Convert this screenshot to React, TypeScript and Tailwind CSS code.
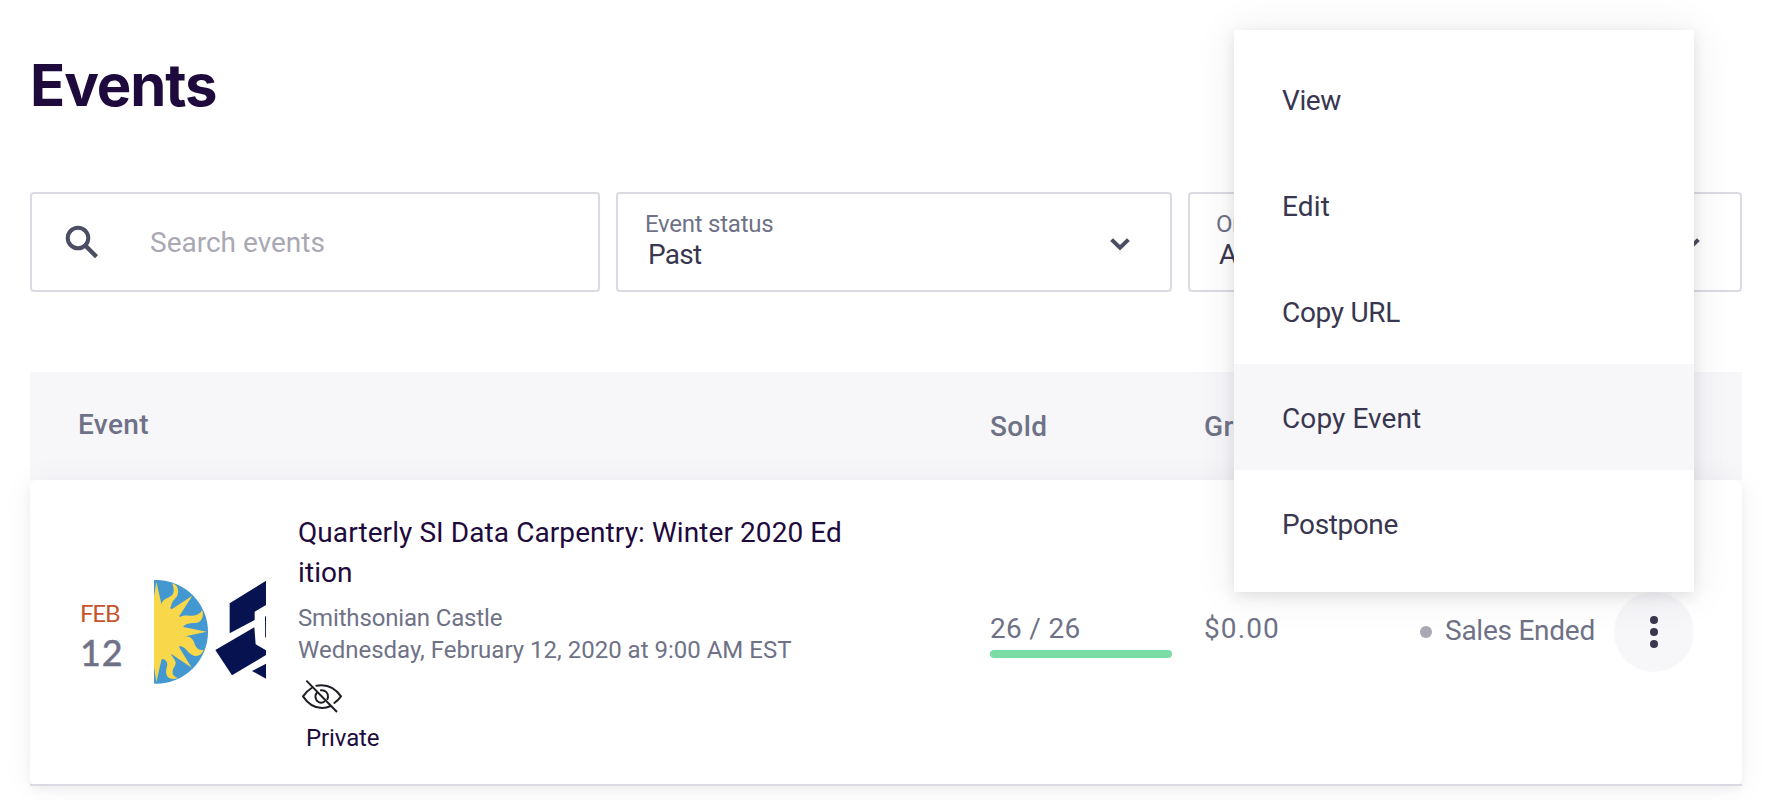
const menuItems = [
  { label: "View", tracking: "tracking-[-0.4px]" },
  { label: "Edit", tracking: "tracking-[0.2px]" },
  { label: "Copy URL", tracking: "tracking-[-0.3px]" },
  { label: "Copy Event", tracking: "tracking-[0.1px]", active: true },
  { label: "Postpone", tracking: "tracking-[-0.4px]" },
];

function SearchIcon() {
  return (
    <svg width="34" height="34" viewBox="0 0 34 34" fill="none" stroke="#4b4d63" className="shrink-0">
      <circle cx="13" cy="13" r="10.3" strokeWidth="4" />
      <path d="M20 20.200 31.500 31.700" strokeWidth="4.4" />
    </svg>
  );
}

function Chevron() {
  return (
    <svg width="20" height="13" viewBox="0 0 20 13" fill="none" stroke="#4b4d63" strokeWidth="4">
      <path d="M1.6 1.6 10 9.8l8.4-8.2" />
    </svg>
  );
}

function HiddenIcon() {
  return (
    <svg width="52" height="46" viewBox="0 0 156 138" fill="none" stroke="#1f1c24" strokeWidth="6" strokeLinejoin="round" strokeLinecap="round">
      <path d="M47 42C37 48 28 57 21 67c16 24 35 35 57 35 9 0 18-2 26-6" />
      <path d="M61 35c31-6 56 6 74 32-6 8-13 15-20 20" />
      <path d="M75 49c14-1 22 9 21 20-.4 3-1 4-2 6" />
      <path d="M63 56c-9 10-4 29 12 30 4 0 8-1 10-3" />
      <path d="M31 20 123 114" strokeLinecap="butt" />
    </svg>
  );
}

function EventImage() {
  return (
    <svg width="112" height="110" viewBox="12 6 336 330" className="mb-[2px] shrink-0">
      <circle cx="18.5" cy="173.5" r="155.5" fill="#4398d1" />
      <g fill="#f8d74b">
        <circle cx="12" cy="173.5" r="86" />
        <path d="M8 95 19 23 36 98 65 106 127 65 88 126 100 159 170 173.500 100 188 87 219 125 281 64 240 36 250 19 325 8 252Z" />
        <path d="M33 97C38 64 67 78 71 52 72 43 68 35 67 28 83 33 87 48 83 62 79 75 65 77 63 98L50 112Z" />
        <path d="M86 136C94 119 108 127 126 125 142 124 151 119 156 108 162 121 158 137 147 144 131 152 117 140 97 160L84 166Z" />
        <path d="M97 187C115 185 128 190 133 207 137 222 148 231 161 227 157 240 146 248 132 245 113 240 109 216 85 216Z" />
        <path d="M63 240C67 252 83 261 75 275 62 293 67 307 84 312 67 318 52 314 49 300 45 285 57 275 49 262 45 255 37 256 34 249Z" />
      </g>
      <g fill="#071351">
        <path d="M239 88 348 20V93L314 113V138L239 178Z" />
        <path d="M196 228 313 160 317 211 348 229V243L246 304Z" />
        <path d="M345 128 348 126V192L345.500 188Z" />
        <path d="M306 291 348 269V314Z" />
      </g>
    </svg>
  );
}

function Select({ label, value, width }: { label: string; value: string; width: string }) {
  return (
    <div className={`flex h-[100px] items-center justify-between rounded-[4px] border-2 border-[#dbdae3] pr-[40px] ${width}`}>
      <div className="flex h-full flex-col pt-[14px]">
        <span className="text-[24px] leading-[32px] tracking-[-0.25px] text-[#6f7287]">{label}</span>
        <span className="pl-[3px] text-[28px] leading-[30px] tracking-[-0.7px] text-[#39364f]">{value}</span>
      </div>
      <div className="pt-[4px]">
        <Chevron />
      </div>
    </div>
  );
}

export default function App() {
  return (
    <div className="relative h-[800px] w-[1778px] overflow-hidden bg-white px-[30px] pt-[50px] font-['Roboto',sans-serif]">
      <h1 className="mb-[72px] font-['Inter',sans-serif] text-[58px] leading-[70px] font-bold tracking-[-1.1px] text-[#1e0a3c]">Events</h1>

      <div className="flex w-[1712px] gap-4">
        <div className="flex h-[100px] w-[570px] items-center rounded-[4px] border-2 border-[#dbdae3] pl-[33px]">
          <SearchIcon />
          <span className="pt-[2px] pl-[51px] text-[28px] leading-[40px] text-[#a9a8b3]">Search events</span>
        </div>
        <Select label="Event status" value="Past" width="w-[556px] pl-[27px]" />
        <Select label="Org" value="All" width="w-[554px] pl-[26px]" />
      </div>

      <div className="mt-[80px] flex h-[108px] w-[1712px] items-center bg-[#f7f7fa] pt-[2px] pl-[48px] text-[28px] leading-[40px] font-medium tracking-[0.4px] text-[#6f7287]">
        <span className="w-[912px] pb-[4px]">Event</span>
        <span className="w-[214px]">Sold</span>
        <span>Gross</span>
      </div>

      <div className="relative flex h-[306px] w-[1712px] items-center rounded-[8px] bg-white pb-[2px] pl-[50px] text-[#6f7287] shadow-[0_4px_8px_rgba(40,44,53,0.05),0_2px_32px_rgba(40,44,53,0.05)]">
        <div className="flex w-[74px] flex-col pt-[4px] font-['Lato',sans-serif]">
          <span className="pt-px text-[24px] leading-[30px] tracking-[-1.2px] text-[#c5532c]">FEB</span>
          <span className="pt-[4px] text-[36px] leading-[40px] font-medium tracking-[0.8px] [-webkit-text-stroke:0.4px_#6f7287]">12</span>
        </div>
        <EventImage />
        <div className="ml-[32px] flex h-full w-[692px] flex-col pt-[33px]">
          <p className="text-[28px] leading-[40px] tracking-[0.08px] text-[#1e0a3c]">
            Quarterly SI Data Carpentry: Winter 2020 Ed
            <br />
            ition
          </p>
          <p className="mt-[9px] text-[24px] leading-[32px] tracking-[-0.16px]">Smithsonian Castle</p>
          <p className="text-[24px] leading-[32px]">Wednesday, February 12, 2020 at 9:00 AM EST</p>
          <div className="mt-[8px] -ml-[2px]">
            <HiddenIcon />
          </div>
          <p className="mt-[2px] pl-[8px] text-[24px] leading-[32px] tracking-[-0.1px] text-[#1e0a3c]">Private</p>
        </div>
        <div className="w-[214px] pt-[2px]">
          <p className="pt-px text-[28px] leading-[40px] tracking-[0.3px]">26 / 26</p>
          <div className="mt-px h-[8px] w-[182px] rounded-full bg-[#7bdda5]" />
        </div>
        <p className="w-[216px] pb-[6px] text-[28px] leading-[40px] tracking-[1.1px]">$0.00</p>
        <div className="flex w-[194px] items-center">
          <span className="h-[12px] w-[12px] rounded-full bg-[#a9a8b3]" />
          <span className="pb-[2px] pl-[13px] text-[28px] leading-[40px] tracking-[-0.25px]">Sales Ended</span>
        </div>
        <button className="flex h-[80px] w-[80px] flex-col items-center justify-center gap-[4px] rounded-full bg-[#f7f7fa]">
          <span className="h-[8px] w-[8px] rounded-full bg-[#39364f]" />
          <span className="h-[8px] w-[8px] rounded-full bg-[#39364f]" />
          <span className="h-[8px] w-[8px] rounded-full bg-[#39364f]" />
        </button>
        <div className="absolute bottom-0 left-0 h-[2px] w-full bg-[#dbdae3]" />
      </div>

      <ul className="absolute top-[30px] left-[1234px] w-[460px] bg-white py-[16px] text-[28px] text-[#39364f] shadow-[0_4px_12px_rgba(40,44,53,0.10),0_2px_40px_rgba(40,44,53,0.09)]">
        {menuItems.map((item) => (
          <li key={item.label} className={`flex h-[106px] items-center pt-[4px] pl-[48px] ${item.tracking} ${item.active ? "bg-[#f7f7fa]" : ""}`}>
            {item.label}
          </li>
        ))}
      </ul>
    </div>
  );
}
